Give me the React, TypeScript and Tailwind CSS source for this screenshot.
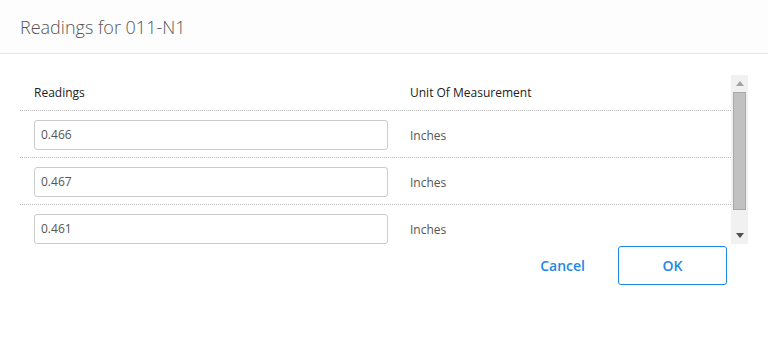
import React from "react";

const rows = ["0.466", "0.467", "0.461"];

export default function App() {
  return (
    <div className="w-[768px] h-[338px] bg-white font-['Open_Sans',sans-serif] overflow-hidden">
      <div className="h-[54px] border-b border-[#e5e5e5] bg-[#fdfdfd] px-5 flex items-center">
        <h1 className="text-[18px] font-light text-[#555] leading-none">Readings for 011-N1</h1>
      </div>
      <div className="px-5 pt-[21px]">
        <div className="flex h-[169px]">
          <div className="flex-1 overflow-hidden">
            <div className="flex h-[36px] items-center border-b border-dotted border-[#bbb] text-[12px] font-medium text-[#222]">
              <div className="w-[376px] pl-[14px]">Readings</div>
              <div className="pl-[14px]">Unit Of Measurement</div>
            </div>
            {rows.map((r) => (
              <div key={r} className="flex h-[47px] pt-[1px] items-center border-b border-dotted border-[#bbb] text-[12px] text-[#555]">
                <div className="w-[376px] pl-[14px] pr-[8px]">
                  <div className="h-[30px] border border-[#ccc] rounded-[3px] flex items-center px-[6px]">{r}</div>
                </div>
                <div className="pl-[14px] pt-[2px]">Inches</div>
              </div>
            ))}
          </div>
          <div className="w-[17px] bg-[#f1f1f1] flex flex-col">
            <div className="h-[17px] flex items-center justify-center">
              <svg width="8" height="5" viewBox="0 0 8 5"><path d="M4 0 L8 5 L0 5 Z" fill="#a3a3a3" /></svg>
            </div>
            <div className="h-[118px] mx-[2px] bg-[#c1c1c1] border border-[#a9a9a9]" />
            <div className="flex-1" />
            <div className="h-[17px] flex items-center justify-center">
              <svg width="8" height="5" viewBox="0 0 8 5"><path d="M0 0 L8 0 L4 5 Z" fill="#505050" /></svg>
            </div>
          </div>
        </div>
      </div>
      <div className="flex justify-end items-center pr-[41px] mt-[2px]">
        <button className="text-[14px] font-semibold text-[#1e88e5] mr-[33px]">Cancel</button>
        <button className="w-[109px] h-[39px] border border-[#1e88e5] rounded-[3px] text-[14px] font-semibold text-[#1e88e5]">OK</button>
      </div>
    </div>
  );
}
